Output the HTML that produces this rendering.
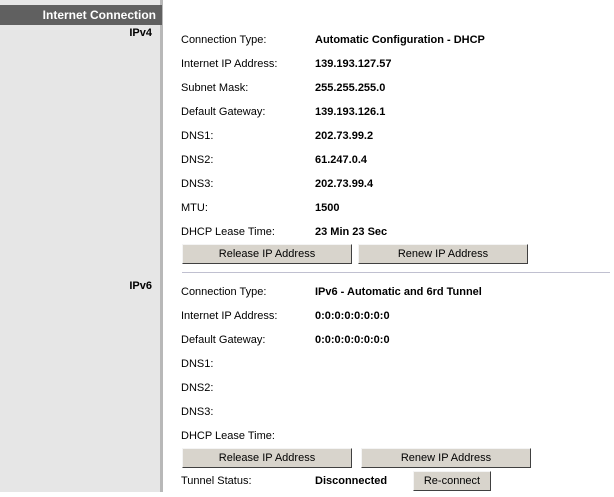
<!DOCTYPE html>
<html><head><style>
body{margin:0;width:614px;height:497px;background:#fff;position:relative;font-family:"Liberation Sans",Arial,sans-serif;font-size:11px;color:#000;overflow:hidden}
.side{position:absolute;left:0;top:0;width:160px;height:492px;background:#e6e6e6;border-right:3px solid #b8b8b8}
.hdr{position:absolute;left:0;top:5px;width:162px;height:20px;background:#606060;color:#fff;font-weight:bold;font-size:12px;text-align:right;line-height:20px;box-sizing:border-box;padding-right:6px}
.sec{position:absolute;right:462px;font-weight:bold;font-size:11px}
.l{position:absolute;left:181px}
.v{position:absolute;left:315px;font-weight:bold}
.b{position:absolute;height:20px;box-sizing:border-box;background:#d8d4cc;border:1px solid;border-color:#f4f4f4 #404040 #404040 #f4f4f4;text-align:center;line-height:18px;font-size:11px}
.hr{position:absolute;left:182px;top:272px;width:428px;height:1px;background:#c0c0d0}
</style></head><body>
<div class="side"></div>
<div class="hdr">Internet Connection</div>
<div class="sec" style="top:27px">IPv4</div>
<div class="sec" style="top:280px">IPv6</div>

<div class="l" style="top:34px">Connection Type:</div><div class="v" style="top:34px">Automatic Configuration - DHCP</div>
<div class="l" style="top:58px">Internet IP Address:</div><div class="v" style="top:58px">139.193.127.57</div>
<div class="l" style="top:82px">Subnet Mask:</div><div class="v" style="top:82px">255.255.255.0</div>
<div class="l" style="top:106px">Default Gateway:</div><div class="v" style="top:106px">139.193.126.1</div>
<div class="l" style="top:130px">DNS1:</div><div class="v" style="top:130px">202.73.99.2</div>
<div class="l" style="top:154px">DNS2:</div><div class="v" style="top:154px">61.247.0.4</div>
<div class="l" style="top:178px">DNS3:</div><div class="v" style="top:178px">202.73.99.4</div>
<div class="l" style="top:202px">MTU:</div><div class="v" style="top:202px">1500</div>
<div class="l" style="top:226px">DHCP Lease Time:</div><div class="v" style="top:226px">23 Min 23 Sec</div>
<div class="b" style="left:182px;top:244px;width:170px">Release IP Address</div>
<div class="b" style="left:358px;top:244px;width:170px">Renew IP Address</div>
<div class="hr"></div>

<div class="l" style="top:286px">Connection Type:</div><div class="v" style="top:286px">IPv6 - Automatic and 6rd Tunnel</div>
<div class="l" style="top:310px">Internet IP Address:</div><div class="v" style="top:310px">0:0:0:0:0:0:0:0</div>
<div class="l" style="top:334px">Default Gateway:</div><div class="v" style="top:334px">0:0:0:0:0:0:0:0</div>
<div class="l" style="top:358px">DNS1:</div>
<div class="l" style="top:382px">DNS2:</div>
<div class="l" style="top:406px">DNS3:</div>
<div class="l" style="top:430px">DHCP Lease Time:</div>
<div class="b" style="left:182px;top:448px;width:170px">Release IP Address</div>
<div class="b" style="left:361px;top:448px;width:170px">Renew IP Address</div>
<div class="l" style="top:475px">Tunnel Status:</div><div class="v" style="top:475px">Disconnected</div>
<div class="b" style="left:413px;top:471px;width:78px">Re-connect</div>
</body></html>
